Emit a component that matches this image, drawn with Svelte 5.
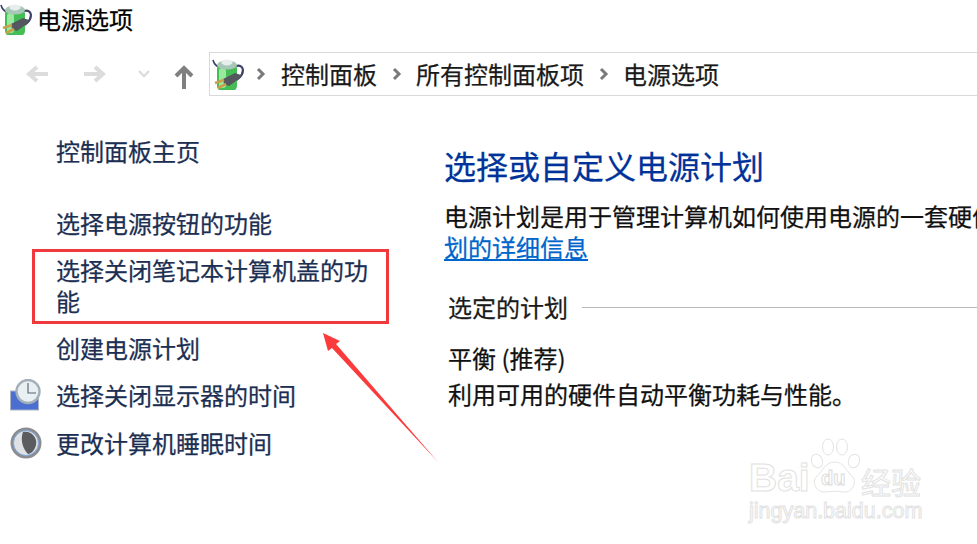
<script>
  const links = [
    { text: '选择关闭显示器的时间', icon: 'clock' },
    { text: '更改计算机睡眠时间', icon: 'moon' }
  ];
</script>

{#snippet battery(size)}
  <svg class="battery" width={size} height={size} viewBox="0 0 32 32">
    <path d="M1 2 C2 6 4 8 7 9" fill="none" stroke="#3a3f66" stroke-width="1.6"/>
    <path d="M24 8 C32 6 33 14 27 20 L23 23" fill="none" stroke="#3f4168" stroke-width="2.2"/>
    <rect x="5" y="6" width="20" height="27" rx="5" fill="#45bd55"/>
    <rect x="7" y="10" width="7" height="20" rx="3" fill="#9be8a0"/>
    <ellipse cx="15" cy="7" rx="10" ry="4.5" fill="#a9c7b6"/>
    <ellipse cx="15" cy="4.5" rx="5.5" ry="3" fill="#e8eeee"/>
    <path d="M11 21 L23 15 L29 17 L28 20 L17 28 L12 26 Z" fill="#55575f"/>
    <path d="M12 22 L3 25 M14 26 L6 30" stroke="#c9a04e" stroke-width="2.6"/>
  </svg>
{/snippet}

<div class="window">
  <header class="title">
    {@render battery(32)}
    <span>电源选项</span>
  </header>

  <nav class="navbar">
    <div class="buttons">
      <svg width="24" height="20" viewBox="0 0 24 20"><path d="M12 3 L4 10 L12 17 M4 10 H23" class="dim"/></svg>
      <svg width="24" height="20" viewBox="0 0 24 20"><path d="M12 3 L20 10 L12 17 M20 10 H1" class="dim"/></svg>
      <svg class="down" width="12" height="8" viewBox="0 0 12 8"><path d="M1 1 L6 6 L11 1" class="dim thin"/></svg>
      <svg class="up" width="20" height="24" viewBox="0 0 20 24"><path d="M2 11 L10 3 L18 11 M10 3 V24" class="dark"/></svg>
    </div>
    <div class="address">
      {@render battery(32)}
      <svg class="sep first" width="10" height="14" viewBox="0 0 10 14"><path d="M2 2 L7 7 L2 12"/></svg>
      <span>控制面板</span>
      <svg class="sep" width="10" height="14" viewBox="0 0 10 14"><path d="M2 2 L7 7 L2 12"/></svg>
      <span>所有控制面板项</span>
      <svg class="sep" width="10" height="14" viewBox="0 0 10 14"><path d="M2 2 L7 7 L2 12"/></svg>
      <span>电源选项</span>
    </div>
  </nav>

  <main class="content">
    <aside class="side">
      <div class="item home">控制面板主页</div>
      <div class="item power">选择电源按钮的功能</div>
      <div class="item lid">选择关闭笔记本计算机盖的功能</div>
      <div class="item create">创建电源计划</div>
      {#each links as l}
        <div class="item withicon">
          {#if l.icon === 'clock'}
            <svg width="32" height="32" viewBox="0 0 32 32">
              <rect x="0.5" y="12" width="28" height="19" fill="#4a6fd0" stroke="#a9b4c6"/>
              <circle cx="18" cy="12.5" r="11.5" fill="#e8f0f4" stroke="#a3b0ba" stroke-width="2.4"/>
              <path d="M18 4 V14 H26" fill="none" stroke="#56626e" stroke-width="1.1"/>
            </svg>
          {:else}
            <svg width="32" height="32" viewBox="0 0 32 32">
              <circle cx="16" cy="16" r="15.5" fill="#8b8d90"/>
              <circle cx="16" cy="16" r="12.5" fill="#dfe2e5" stroke="#7ea8dc"/>
              <path d="M13 5 C20 3 28 10 26 18 C25 23 21 27 18 27 C13 22 10 13 13 5 Z" fill="#5b5c60"/>
            </svg>
          {/if}
          <span>{l.text}</span>
        </div>
      {/each}
    </aside>

    <section class="panel">
      <h1>选择或自定义电源计划</h1>
      <p class="desc">电源计划是用于管理计算机如何使用电源的一套硬件和系统设置。<br/><a href="#top">划的详细信息</a></p>
      <div class="group">
        <span>选定的计划</span>
        <div class="rule"></div>
      </div>
      <p class="plan">平衡 (推荐)<br/>利用可用的硬件自动平衡功耗与性能。</p>
    </section>
  </main>

  <div class="redbox"></div>
  <svg class="arrow" width="977" height="544" viewBox="0 0 977 544">
    <path d="M323 333 L340 341 L336 344 L438 462 L332 348 L328 351 Z" fill="#fb3b3b"/>
  </svg>

  <div class="mark">
    <div class="markrow">
      <span class="bai">Bai</span>
      <svg width="52" height="58" viewBox="0 0 52 58">
        <g fill="#fff" stroke="#e4e4e4" stroke-width="1">
          <ellipse cx="8" cy="23" rx="5.5" ry="7" transform="rotate(-20 8 23)"/>
          <ellipse cx="19" cy="9" rx="5.5" ry="8"/>
          <ellipse cx="33" cy="9" rx="5.5" ry="8"/>
          <ellipse cx="45" cy="23" rx="5.5" ry="7" transform="rotate(20 45 23)"/>
          <path d="M26 24 C35 24 37 33 43 38 C49 44 43 55 35 54 C29 53 23 53 17 54 C7 55 2 44 8 38 C14 33 16 24 26 24 Z"/>
        </g>
        <text x="12" y="47" class="du">du</text>
      </svg>
      <span class="jy">经验</span>
    </div>
    <div class="url">jingyan.baidu.com</div>
  </div>
</div>

<style>
  :global(body) { margin: 0; background: #fff; }
  .window {
    position: relative;
    width: 977px;
    height: 544px;
    overflow: hidden;
    background: #fff;
    color: #1a1a1a;
    font-family: "Noto Sans CJK SC", "Noto Sans", sans-serif;
    font-size: 24px;
    line-height: 32px;
    -webkit-text-stroke: 0.25px currentColor;
  }
  .title {
    display: flex;
    align-items: center;
    gap: 5px;
    height: 32px;
    padding-top: 3px;
    color: #000;
  }
  .title .battery { flex: none; }
  .navbar {
    display: flex;
    align-items: center;
    margin-top: 17px;
    height: 44px;
  }
  .buttons {
    display: flex;
    align-items: center;
    width: 209px;
    padding-left: 25px;
    box-sizing: border-box;
    flex: none;
  }
  .buttons svg { flex: none; }
  .buttons svg:nth-child(2) { margin-left: 34px; }
  .buttons .down { margin-left: 31px; }
  .buttons .up { margin-left: 24px; margin-top: 6px; }
  .dim, .dark { fill: none; stroke-width: 4; }
  .dim { stroke: #dcdcdc; }
  .dim.thin { stroke-width: 2.4; }
  .dark { stroke: #7f7f7f; }
  .address {
    flex: 1;
    display: flex;
    align-items: center;
    height: 44px;
    box-sizing: border-box;
    border: 1px solid #d9d9d9;
    border-right: none;
    padding-left: 2px;
  }
  .address .battery { flex: none; }
  .sep { flex: none; margin: 0 14px 0 15px; }
  .sep.first { margin-left: 12px; margin-right: 15px; }
  .sep path { fill: none; stroke: #7a7a7a; stroke-width: 3; }
  .content {
    display: flex;
    margin-top: 36px;
  }
  .side {
    width: 444px;
    flex: none;
    color: #1c2f52;
  }
  .item { padding-left: 56px; box-sizing: border-box; }
  .home { height: 38px; padding-top: 3px; margin-bottom: 34px; box-sizing: content-box; }
  .power { height: 32px; margin-bottom: 15px; }
  .lid { width: 370px; height: 62px; line-height: 31px; margin-bottom: 16px; }
  .create { height: 32px; margin-bottom: 15px; }
  .withicon {
    display: flex;
    align-items: center;
    gap: 14px;
    padding-left: 10px;
    height: 32px;
    margin-bottom: 16px;
  }
  .withicon svg { flex: none; }
  .panel { flex: 1; min-width: 0; white-space: nowrap; overflow: hidden; }
  h1 {
    margin: 11px 0 0;
    font-size: 32px;
    font-weight: 400;
    line-height: 44px;
    color: #003399;
  }
  .desc { margin: 13px 0 0; line-height: 31px; color: #111; }
  .desc a { color: #0066cc; text-decoration: underline; }
  .group {
    display: flex;
    align-items: center;
    gap: 14px;
    margin-top: 29px;
    padding-left: 4px;
  }
  .rule { flex: 1; height: 1px; background: #b9b9b9; }
  .plan { margin: 17px 0 0 4px; line-height: 36px; color: #111; }
  .redbox {
    position: absolute;
    left: 32px;
    top: 249px;
    width: 351px;
    height: 69px;
    border: 3px solid #f0393c;
  }
  .arrow { position: absolute; left: 0; top: 0; }
  .mark {
    position: absolute;
    left: 749px;
    top: 438px;
    color: #fff;
    font-family: "Liberation Sans", sans-serif;
    -webkit-text-stroke: 1px #e2e2e2;
  }
  .markrow { display: flex; align-items: flex-end; height: 58px; line-height: 1; }
  .bai { font-size: 39px; font-weight: 700; width: 60px; margin-bottom: -1px; }
  .du { font-size: 20px; font-weight: 700; fill: #fff; stroke: #dcdcdc; stroke-width: 1; }
  .jy { font-family: "Noto Sans CJK SC", sans-serif; font-size: 30px; margin-bottom: 0; }
  .url { font-size: 21.5px; line-height: 26px; margin-top: 2px; }
</style>
